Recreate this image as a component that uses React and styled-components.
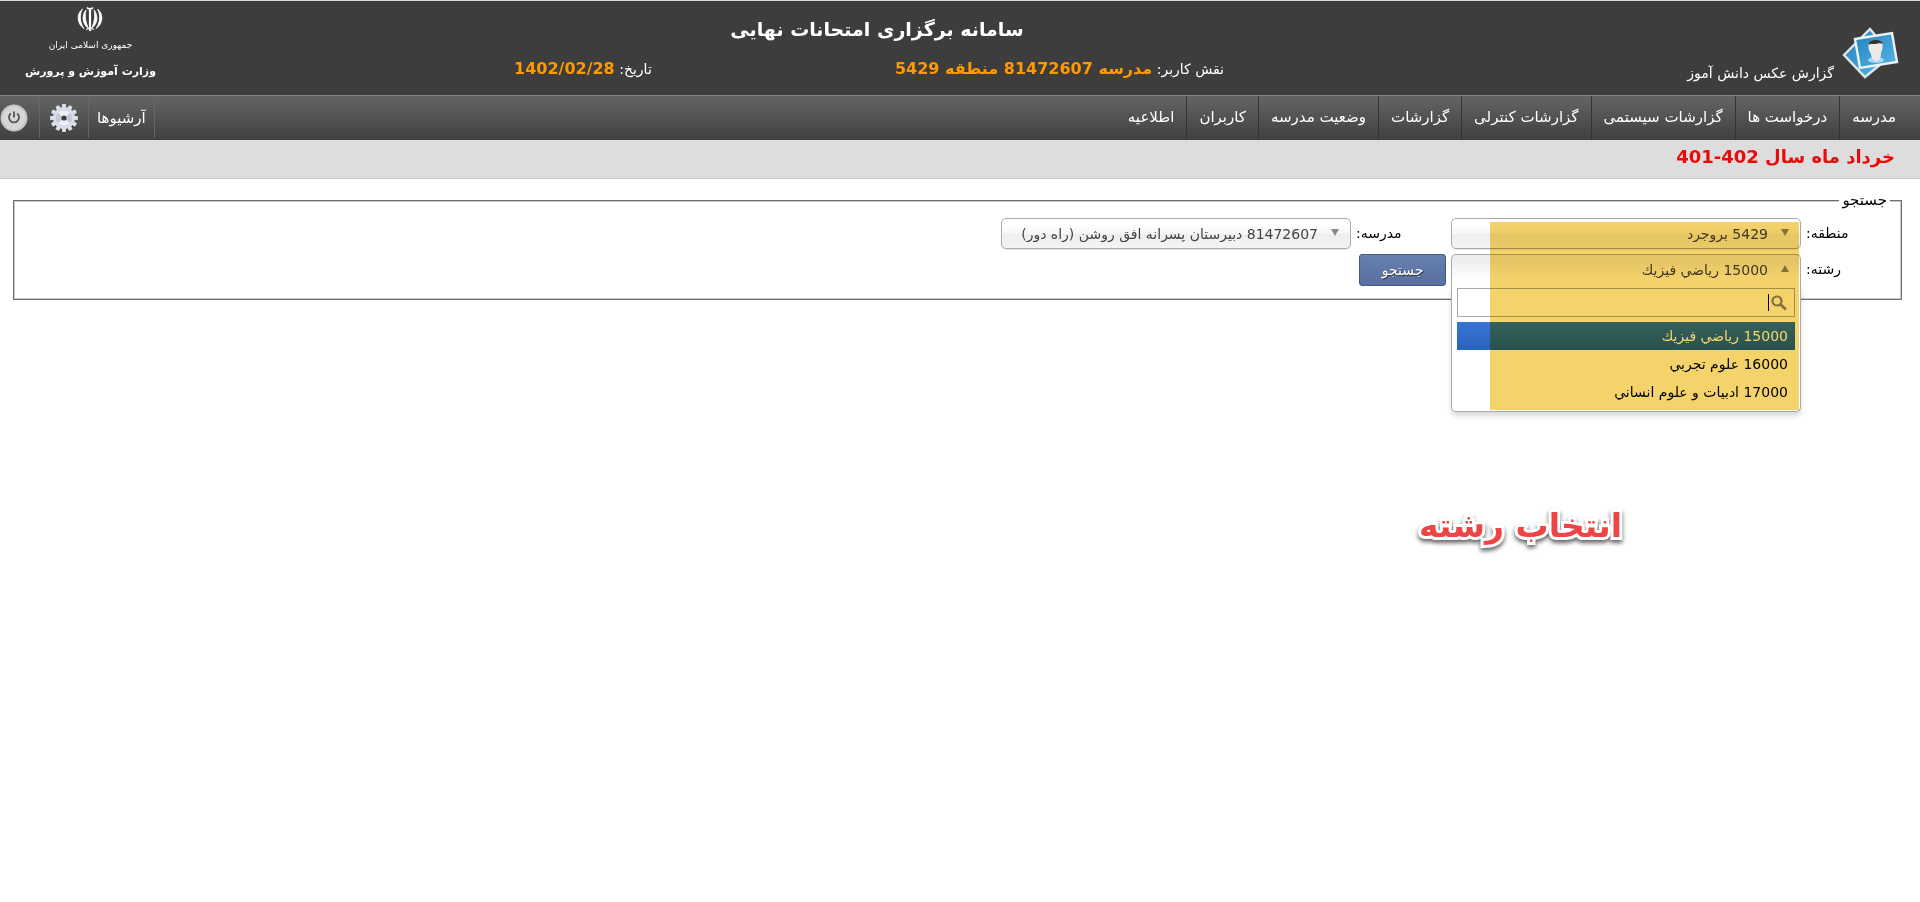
import styled, { createGlobalStyle, css } from 'styled-components'

const MENU = ['مدرسه', 'درخواست ها', 'گزارشات سیستمی', 'گزارشات کنترلی', 'گزارشات', 'وضعیت مدرسه', 'کاربران', 'اطلاعیه']
const FIELDS = ['15000 رياضي فيزيك', '16000 علوم تجربي', '17000 ادبيات و علوم انساني']

const EmblemIcon = () => (
  <svg width="26" height="26" viewBox="0 0 26 26" fill="none" stroke="#fff" aria-hidden="true">
    <path d="M5.500 3C-1 8 0 18 7 22.500C3 17 2 9 5.500 3Z" fill="#fff" strokeWidth="0.800" />
    <path d="M20.500 3C27 8 26 18 19 22.500C23 17 24 9 20.500 3Z" fill="#fff" strokeWidth="0.800" />
    <path d="M9 4C4.500 9 5 18 11.500 22.500C8.500 16 7.500 10 9 4Z" fill="#fff" strokeWidth="0.800" />
    <path d="M17 4C21.500 9 21 18 14.500 22.500C17.500 16 18.500 10 17 4Z" fill="#fff" strokeWidth="0.800" />
    <path d="M13 3.500V25" strokeWidth="2.200" />
    <path d="M10 1.500Q11.500 3.500 13 2.500Q14.500 3.500 16 1.500" strokeWidth="1.600" />
    <path d="M9 23.500Q13 21.500 17 23.500" strokeWidth="1.200" />
  </svg>
)

const PhotosIcon = () => (
  <svg width="58" height="54" viewBox="0 0 58 54" aria-hidden="true">
    <defs>
      <linearGradient id="photo" x1="0" y1="0" x2="1" y2="1">
        <stop offset="0" stopColor="#2583be" />
        <stop offset="1" stopColor="#55b5e6" />
      </linearGradient>
    </defs>
    <path d="M28 2L50 28L23 50L2 28Z" fill="url(#photo)" stroke="#dfe5e8" strokeWidth="2.400" />
    <path d="M13 12L50 6L55 35L18 41Z" fill="url(#photo)" stroke="#eef2f4" strokeWidth="2.400" />
    <ellipse cx="34" cy="33" rx="8" ry="3" fill="#a9d8f0" />
    <path d="M26.500 17C27 14 40 13 40.500 17C41 21 40 24 39 26C39 31 38 34 34 34C30.500 34 29.500 31 29 27C27 24 26 21 26.500 17Z" fill="#eceae6" />
    <path d="M26.500 18C26 12 40 11 40.500 17C38 15.500 36 17 33 17C30 17 28 16.500 26.500 18Z" fill="#38342f" />
  </svg>
)

const GearIcon = () => (
  <svg width="28" height="28" viewBox="0 0 28 28" aria-hidden="true">
    <g fill="#d9dee8">
      {[0, 30, 60, 90, 120, 150].map((angle) => (
        <rect key={angle} x="12" y="0" width="4" height="28" rx="1" transform={`rotate(${angle} 14 14)`} />
      ))}
      <circle cx="14" cy="14" r="11" />
    </g>
    <circle cx="14" cy="14" r="8" fill="#c3cad7" />
    <path d="M14 14L8 9A8 8 0 0 1 20 9ZM14 14L8 19A8 8 0 0 0 20 19Z" fill="#eef1f6" />
    <circle cx="14" cy="14" r="2.600" fill="#3a3d42" />
  </svg>
)

const PowerIcon = () => (
  <svg width="28" height="28" viewBox="0 0 28 28" aria-hidden="true">
    <circle cx="14" cy="14" r="13.500" fill="#c4c4c2" />
    <circle cx="14" cy="14" r="11.500" fill="#d6d6d4" />
    <path d="M10.800 9.500A5 5 0 1 0 17.200 9.500M14 7.500V13.500" fill="none" stroke="#555" strokeWidth="1.800" />
  </svg>
)

const SearchIcon = () => (
  <svg width="16" height="16" viewBox="0 0 16 16" fill="none" stroke="#8a8a8a" aria-hidden="true">
    <circle cx="6" cy="6" r="4.500" strokeWidth="2.200" />
    <path d="M9.500 9.500L15 14.500" strokeWidth="2.800" />
  </svg>
)

const Picker = ({ id, options, open }) => (
  <PickerBox>
    <Select id={id} $open={open}>
      {options.map((option) => <option key={option}>{option}</option>)}
    </Select>
    <Arrow width="8" height="7" viewBox="0 0 8 7" aria-hidden="true">
      <path d={open ? 'M0 7L4 0L8 7Z' : 'M0 0L4 7L8 0Z'} fill="#888" />
    </Arrow>
    {open && (
      <DropPanel>
        <SearchBox>
          <SearchIcon />
          <Caret />
          <SearchInput type="text" aria-label="جستجو" />
        </SearchBox>
        <OptionList role="listbox">
          {options.map((option, i) => (
            <Option key={option} role="option" aria-selected={i === 0} $active={i === 0}>{option}</Option>
          ))}
        </OptionList>
      </DropPanel>
    )}
    {open && <Highlight />}
  </PickerBox>
)

const App = () => {
  return (
    <>
      <GlobalStyle />
      <Page dir="rtl" lang="fa">
        <Header>
          <PageTitle>
            <PhotosIcon />
            <span>گزارش عکس دانش آموز</span>
          </PageTitle>
          <div>
            <SystemName>سامانه برگزاری امتحانات نهایی</SystemName>
            <UserInfo>
              <span>نقش کاربر: <Strong>مدرسه 81472607 منطقه 5429</Strong></span>
              <span>تاریخ: <Strong>1402/02/28</Strong></span>
            </UserInfo>
          </div>
          <Ministry>
            <EmblemIcon />
            <Country>جمهوری اسلامی ایران</Country>
            <MinistryName>وزارت آموزش و پرورش</MinistryName>
          </Ministry>
        </Header>
        <Nav>
          <Menu>
            {MENU.map((item) => (
              <MenuItem key={item}><MenuLink href="#">{item}</MenuLink></MenuItem>
            ))}
          </Menu>
          <Tools>
            <ToolLink href="#">آرشیوها</ToolLink>
            <ToolButton type="button" aria-label="تنظیمات"><GearIcon /></ToolButton>
            <ToolButton type="button" aria-label="خروج"><PowerIcon /></ToolButton>
          </Tools>
        </Nav>
        <Period>خرداد ماه سال 402-401</Period>
        <main>
          <Fieldset>
            <Legend>جستجو</Legend>
            <Form>
              <Label htmlFor="region">منطقه:</Label>
              <Picker id="region" options={['5429 بروجرد']} />
              <Label htmlFor="school">مدرسه:</Label>
              <Picker id="school" options={['81472607 دبيرستان پسرانه افق روشن (راه دور)']} />
              <Label htmlFor="field">رشته:</Label>
              <Picker id="field" options={FIELDS} open />
              <Submit type="button">جستجو</Submit>
            </Form>
          </Fieldset>
          <Note>انتخاب رشته</Note>
        </main>
      </Page>
    </>
  )
}

const GlobalStyle = createGlobalStyle`
  * {
    box-sizing: border-box;
  }
  body {
    margin: 0;
    background: #fff;
  }
  body, button, input, select {
    font-family: Tahoma, "DejaVu Sans", sans-serif;
    font-size: 14px;
  }
`
const Page = styled.div`
  color: #000;
`
const Header = styled.header`
  display: grid;
  grid-template-columns: 340fr 363fr 257fr;
  height: 95px;
  border-top: 1px solid #d5dbd8;
  color: #fff;
  background: #3d3d3d;
`
const PageTitle = styled.div`
  display: flex;
  align-items: flex-end;
  gap: 8px;
  padding: 0 20px 14px;
`
const SystemName = styled.h1`
  margin: 12px 0 16px;
  font-size: 19px;
  line-height: 32px;
  text-align: center;
`
const UserInfo = styled.div`
  display: flex;
  justify-content: space-between;
  padding-inline-start: 16px;
  line-height: 16px;
`
const Strong = styled.strong`
  font-size: 16px;
  color: #f90;
`
const Ministry = styled.div`
  display: flex;
  flex-direction: column;
  align-items: center;
  justify-self: end;
  padding: 5px 25px 0;
`
const Country = styled.span`
  font-size: 9px;
  line-height: 26px;
`
const MinistryName = styled.span`
  font-size: 11px;
  font-weight: bold;
  line-height: 28px;
`
const Nav = styled.nav`
  display: flex;
  justify-content: space-between;
  height: 45px;
  border-top: 1px solid #858585;
  background: linear-gradient(#646464, #404040);
  font-size: 15px;
`
const Menu = styled.ul`
  display: flex;
  margin: 0;
  padding: 0 12px;
  list-style: none;
`
const MenuItem = styled.li`
  display: flex;
  & + & {
    border-right: 1px solid #333;
  }
`
const toolItem = css`
  display: flex;
  align-items: center;
  border: 0;
  border-left: 1px solid #666;
`
const MenuLink = styled.a`
  padding: 0 12px;
  color: #fff;
  line-height: 42px;
  text-decoration: none;
`
const Tools = styled.div`
  display: flex;
  padding: 2px 0;
`
const ToolLink = styled.a`
  ${toolItem}
  padding: 0 8px;
  border-right: 1px solid #666;
  color: #fff;
  text-decoration: none;
`
const ToolButton = styled.button`
  ${toolItem}
  padding: 0 10px;
  background: none;
  &:last-child {
    padding: 0 11px 0 0;
    border: 0;
  }
`
const Period = styled.div`
  height: 39px;
  padding: 0 25px;
  border-bottom: 1px solid #ccc;
  color: #e90a0a;
  background: #ddd;
  font-size: 18px;
  font-weight: bold;
  line-height: 34px;
`
const Fieldset = styled.fieldset`
  margin: 12px 18px 0 13px;
  padding: 9px 50px 13px;
  border: 1px solid #6e6e6e;
  box-shadow: inset 0 0 0 1px #ccc;
`
const Legend = styled.legend`
  margin-right: -39px;
  padding: 0 3px;
  background: #fff;
  font-size: 15px;
  line-height: 18px;
`
const Form = styled.form`
  display: grid;
  grid-template-columns: 45px 350px 90px 350px;
  gap: 5px;
`
const Label = styled.label`
  line-height: 31px;
  text-align: end;
  white-space: nowrap;
`
const PickerBox = styled.div`
  position: relative;
  height: 31px;
`
const Select = styled.select`
  width: 100%;
  height: 31px;
  padding: 0 32px 0 8px;
  border: 1px solid #aaa;
  border-radius: 5px;
  appearance: none;
  color: #444;
  background: linear-gradient(#fff 20%, #f6f6f6 50%, #eee 52%, #f4f4f4 100%);
  box-shadow: 0 1px 1px rgba(0, 0, 0, 0.1);
  ${({ $open }) => $open && css`
    border-bottom: 0;
    border-radius: 5px 5px 0 0;
    background: linear-gradient(#eee 20%, #fff 80%);
    box-shadow: none;
  `}
`
const Arrow = styled.svg`
  position: absolute;
  top: 11px;
  right: 12px;
`
const DropPanel = styled.div`
  position: absolute;
  top: 31px;
  right: 0;
  left: 0;
  padding: 3px 5px 5px;
  border: 1px solid #aaa;
  border-top: 0;
  border-radius: 0 0 5px 5px;
  background: #fff;
  box-shadow: 0 4px 5px rgba(0, 0, 0, 0.15);
`
const SearchBox = styled.div`
  display: flex;
  align-items: center;
  height: 29px;
  padding: 0 7px;
  border: 1px solid #aaa;
`
const Caret = styled.span`
  width: 1px;
  height: 17px;
  margin-right: 2px;
  background: #000;
`
const SearchInput = styled.input`
  flex: 1;
  min-width: 0;
  padding: 0;
  border: 0;
  outline: 0;
`
const OptionList = styled.ul`
  margin: 5px 0 0;
  padding: 0;
  list-style: none;
`
const Option = styled.li`
  padding: 0 7px;
  line-height: 28px;
  color: ${({ $active }) => ($active ? '#fff' : '#000')};
  background: ${({ $active }) => ($active ? 'linear-gradient(#3875d7, #2a62bc)' : 'none')};
`
const Highlight = styled.div`
  position: absolute;
  top: -32px;
  right: 2px;
  left: 39px;
  height: 188px;
  background: #f5d36b;
  mix-blend-mode: multiply;
  pointer-events: none;
`
const Submit = styled.button`
  width: 87px;
  height: 32px;
  border: 1px solid #435688;
  border-radius: 3px;
  color: #fff;
  background: linear-gradient(#6680b0, #586f9f);
  text-shadow: 1px 1px 1px #333;
`
const Note = styled.p`
  width: fit-content;
  margin: 192px 290px 0 0;
  padding: 8px;
  color: #ef4444;
  font-size: 33px;
  font-weight: bold;
  line-height: 52px;
  -webkit-text-stroke: 6px #fff;
  paint-order: stroke fill;
  filter: drop-shadow(0 3px 2px rgba(0, 0, 0, 0.6));
`

export default App
